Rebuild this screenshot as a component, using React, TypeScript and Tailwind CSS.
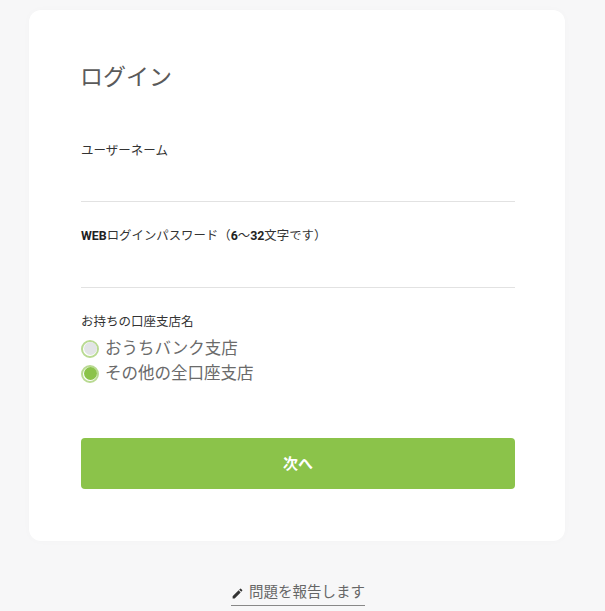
import React from "react";

const font = "font-['Roboto','Noto_Sans_CJK_JP',sans-serif]";

function Radio({ label, checked }: { label: string; checked?: boolean }) {
  return (
    <div className="flex items-center h-[25px]">
      <span className="w-[18px] h-[18px] rounded-full border-2 border-[#b9da92] flex items-center justify-center mr-[6px]">
        <span className={`w-[13px] h-[13px] rounded-full ${checked ? "bg-[#8bc34a]" : "bg-[#e2e4e6]"}`} />
      </span>
      <span className="text-[16.5px] leading-[24px] text-[#6a6a6a]">{label}</span>
    </div>
  );
}

export default function App() {
  return (
    <div className={`${font} w-[605px] h-[611px] overflow-hidden bg-[#f7f7f8] flex flex-col items-center`}>
      <div className="mt-[10px] ml-[-11px] w-[536px] h-[531px] bg-white rounded-[12px] shadow-[0_0_8px_rgba(0,0,0,0.02)] pt-[52px] pl-[52px] pr-[50px] shrink-0">
        <h1 className="text-[23px] leading-[32px] text-[#5a5a5a] ml-[-1px]">ログイン</h1>
        <div className="mt-[47px] h-[85px]">
          <div className="text-[12.5px] leading-[20px] text-[#333]">ユーザーネーム</div>
          <div className="h-[40px]" />
          <div className="h-px bg-[#e2e2e2]" />
        </div>
        <div className="h-[86px]">
          <div className="text-[12.4px] leading-[20px] text-[#333]">
            <span className="font-bold text-[#222]">WEB</span>ログインパスワード（<span className="font-bold text-[#222]">6</span>～<span className="font-bold text-[#222]">32</span>文字です）
          </div>
          <div className="h-[41px]" />
          <div className="h-px bg-[#e2e2e2]" />
        </div>
        <div className="text-[12.5px] leading-[20px] text-[#333]">お持ちの口座支店名</div>
        <div className="mt-[4px]">
          <Radio label="おうちバンク支店" />
          <Radio label="その他の全口座支店" checked />
        </div>
        <button className="mt-[52px] block w-full h-[51px] pt-px rounded-[4px] bg-[#8bc34a] text-white font-bold text-[15px]">次へ</button>
      </div>
      <div className="mt-[40px] ml-[-9px] flex items-center gap-[5px] border-b border-[#888] h-[25px] text-[14.5px] text-[#666]">
        <svg viewBox="0 0 24 24" className="w-[13px] h-[13px]" fill="#333"><path d="M3 17.25V21h3.75L17.81 9.94l-3.75-3.75L3 17.25zM20.71 7.04a1 1 0 0 0 0-1.41l-2.34-2.34a1 1 0 0 0-1.41 0l-1.83 1.83 3.75 3.75 1.83-1.83z"/></svg>
        <span>問題を報告します</span>
      </div>
    </div>
  );
}
